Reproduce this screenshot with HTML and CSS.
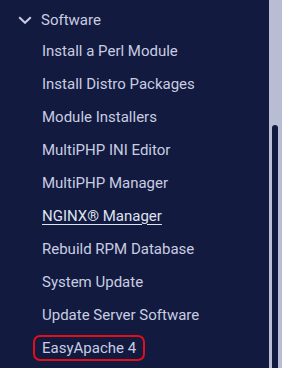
FILE: index.html
```html
<!DOCTYPE html>
<html lang="en">
<head>
    <meta charset="UTF-8">
    <meta name="viewport" content="width=device-width, initial-scale=1.0">
    <title>Software</title>
    <link rel="stylesheet" href="styles.css">
</head>
<body>
    <div class="sidebar">
        <nav class="menu">
            <div class="group-title">
                <svg class="chevron" width="14" height="8" viewBox="0 0 14 8">
                    <path d="M1.2 1.2 L7 6.8 L12.8 1.2" fill="none" stroke="#c8cde2" stroke-width="2"/>
                </svg>
                <span>Software</span>
            </div>
            <ul class="items">
                <li><a href="#">Install a Perl Module</a></li>
                <li><a href="#">Install Distro Packages</a></li>
                <li><a href="#">Module Installers</a></li>
                <li><a href="#">MultiPHP INI Editor</a></li>
                <li><a href="#">MultiPHP Manager</a></li>
                <li><a href="#" class="current">NGINX® Manager</a></li>
                <li><a href="#">Rebuild RPM Database</a></li>
                <li><a href="#">System Update</a></li>
                <li><a href="#">Update Server Software</a></li>
                <li><a href="#" class="highlight">EasyApache 4</a></li>
            </ul>
        </nav>
        <div class="scrollbar">
            <div class="thumb"></div>
        </div>
    </div>
</body>
</html>
```

FILE: styles.css
```css
body {
    margin: 0;
    background-color: #131a3f;
    font-family: Roboto, "Liberation Sans", sans-serif;
}

.sidebar {
    display: flex;
    height: 368px;
    overflow: hidden;
}

.menu {
    flex: 1;
    padding-top: 6px;
}

.group-title {
    display: flex;
    align-items: center;
    gap: 9px;
    height: 28px;
    padding-left: 18px;
    color: #c8cde2;
    font-size: 15px;
}

.chevron {
    display: block;
}

.items {
    list-style: none;
    margin: 0;
    padding: 0;
}

.items li {
    height: 33px;
    display: flex;
    align-items: center;
}

.items a {
    color: #c8cde2;
    text-decoration: none;
    font-size: 15px;
    line-height: 18px;
    margin-left: 42px;
}

.items a.current {
    text-decoration: underline;
    text-underline-offset: 3px;
    color: #dfe3f0;
}

.items a.highlight {
    margin-left: 33px;
    padding: 2px 7px;
    border: 2px solid #e0101a;
    border-radius: 7px;
}

.scrollbar {
    width: 13px;
    background-color: #b9bdd4;
    display: flex;
    flex-direction: column;
    padding-left: 3px;
    padding-right: 4px;
    box-sizing: border-box;
}

.thumb {
    margin-top: 125px;
    flex: 1;
    background-color: #131a3f;
    border-radius: 3px 3px 0 0;
}
```
